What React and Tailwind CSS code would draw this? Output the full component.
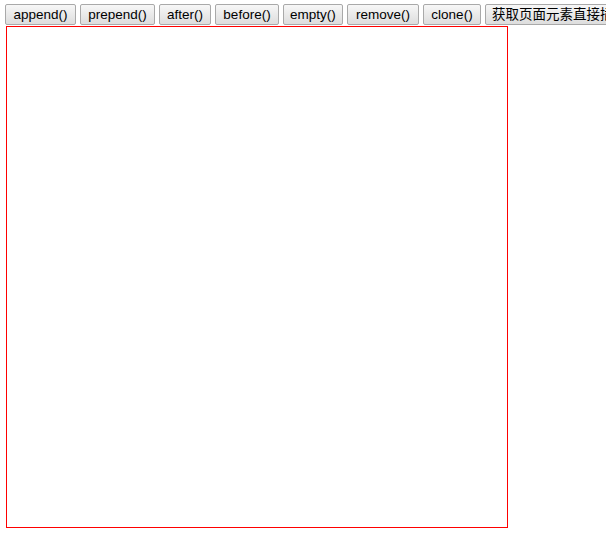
const buttons = [
  { label: 'append()', w: 'w-[71px]' },
  { label: 'prepend()', w: 'w-[75px]' },
  { label: 'after()', w: 'w-[52px]' },
  { label: 'before()', w: 'w-[64px]' },
  { label: 'empty()', w: 'w-[60px]' },
  { label: 'remove()', w: 'w-[72px]' },
  { label: 'clone()', w: 'w-[58px]' },
  { label: '获取页面元素直接插入', w: 'w-auto px-[6px]' },
]

export default function App() {
  return (
    <div className="w-[606px] h-[551px] overflow-hidden bg-white" style={{ fontFamily: '"Liberation Sans", "Noto Sans CJK SC", sans-serif' }}>
      <div className="flex gap-[4px] pl-[5px] pt-[4px] whitespace-nowrap">
        {buttons.map(b => (
          <button
            key={b.label}
            className={`${b.w} shrink-0 h-[21px] border border-[#a9a9a9] rounded-[2px] bg-gradient-to-b from-[#f7f7f7] to-[#dddddd] text-[13.5px] leading-none text-black text-center`}
          >
            {b.label}
          </button>
        ))}
      </div>
      <div className="ml-[6px] mt-[1px] w-[502px] h-[502px] border border-[#ff0000]" />
    </div>
  )
}
